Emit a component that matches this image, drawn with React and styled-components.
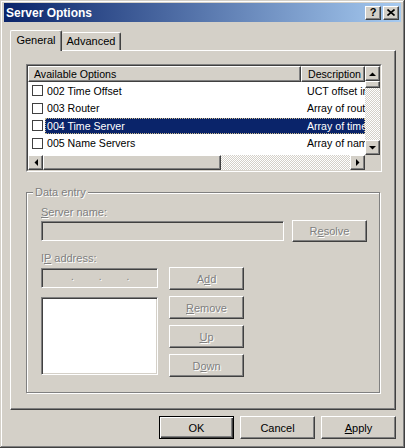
import React from "react";
import styled, { createGlobalStyle, css } from "styled-components";

const GlobalStyle = createGlobalStyle`
  html, body { margin: 0; padding: 0; }
  body {
    background: #d4d0c8;
    font-family: "Liberation Sans", Arial, sans-serif;
    font-size: 11px;
    color: #000;
  }
`;

const raised = css`
  border: 1px solid;
  border-color: #fff #404040 #404040 #fff;
  box-shadow: inset -1px -1px 0 #808080;
`;

const sunkenOuter = css`
  border: 1px solid;
  border-color: #808080 #fff #fff #808080;
`;

const disabledText = css`
  color: #808080;
  text-shadow: 1px 1px 0 #fff;
`;

const checker = css`
  background: repeating-conic-gradient(#fff 0 25%, #d4d0c8 0 50%) 0 0 / 2px 2px;
`;

const Window = styled.div`
  width: 405px;
  height: 448px;
  box-sizing: border-box;
  background: #d4d0c8;
  padding: 3px 4px 4px 4px;
  display: flex;
  flex-direction: column;
  box-shadow: inset -1px -1px 0 #404040, inset 1px 1px 0 #d4d0c8,
    inset -2px -2px 0 #808080, inset 2px 2px 0 #fff;
`;

const TitleBar = styled.div`
  height: 19px;
  flex: none;
  display: flex;
  align-items: center;
  justify-content: space-between;
  padding: 0 2px 0 2px;
  background: linear-gradient(to right, #0a246a, #a6caf0);
`;

const TitleText = styled.div`
  color: #fff;
  font-weight: bold;
  font-size: 12px;
`;

const TitleButtons = styled.div`
  display: flex;
  gap: 2px;
`;

const TitleButton = styled.div`
  width: 16px;
  height: 14px;
  box-sizing: border-box;
  background: #d4d0c8;
  ${raised};
  display: flex;
  align-items: center;
  justify-content: center;
  font-weight: bold;
  font-size: 11px;
  line-height: 1;
`;

const Body = styled.div`
  flex: 1;
  display: flex;
  flex-direction: column;
  padding: 8px 5px 0 6px;
`;

const TabStrip = styled.div`
  height: 20px;
  display: flex;
  align-items: flex-end;
  position: relative;
  z-index: 1;
`;

const Tab = styled.div`
  box-sizing: border-box;
  width: ${(p) => p.$w}px;
  height: ${(p) => (p.$active ? 21 : 18)}px;
  margin-bottom: ${(p) => (p.$active ? -1 : 0)}px;
  background: #d4d0c8;
  border-top: 1px solid #fff;
  border-left: ${(p) => (p.$active ? "1px solid #fff" : "none")};
  border-right: 1px solid #404040;
  box-shadow: inset -1px 0 0 #808080;
  border-radius: 2px 2px 0 0;
  display: flex;
  justify-content: center;
  padding-top: ${(p) => (p.$active ? 3 : 2)}px;
  font-size: 11px;
`;

const Panel = styled.div`
  height: 360px;
  box-sizing: border-box;
  border: 1px solid;
  border-color: #fff #404040 #404040 #fff;
  box-shadow: inset -1px -1px 0 #808080;
  padding: 13px 13px 0 15px;
  display: flex;
  flex-direction: column;
`;

const ListView = styled.div`
  width: 356px;
  height: 108px;
  box-sizing: border-box;
  ${sunkenOuter};
  font-size: 10.6px;
`;

const ListInner = styled.div`
  height: 100%;
  box-sizing: border-box;
  border: 1px solid;
  border-color: #404040 #d4d0c8 #d4d0c8 #404040;
  background: #fff;
  display: grid;
  grid-template-columns: 1fr 15px;
  grid-template-rows: 1fr 15px;
`;

const ListContent = styled.div`
  overflow: hidden;
  display: flex;
  flex-direction: column;
`;

const Header = styled.div`
  height: 16px;
  display: flex;
  flex: none;
`;

const HeaderCell = styled.div`
  box-sizing: border-box;
  width: ${(p) => (p.$w ? `${p.$w}px` : "auto")};
  flex: ${(p) => (p.$w ? "none" : "1")};
  background: #d4d0c8;
  ${raised};
  padding-left: ${(p) => p.$pad}px;
  display: flex;
  align-items: center;
  white-space: nowrap;
  overflow: hidden;
`;

const Row = styled.div`
  height: 17.5px;
  display: flex;
  align-items: center;
  flex: none;
`;

const CheckBox = styled.div`
  width: 11px;
  height: 11px;
  box-sizing: border-box;
  border: 1px solid #404040;
  background: #fff;
  margin-left: 4px;
  flex: none;
`;

const RowSel = styled.div`
  flex: 1;
  margin-left: 2px;
  height: 16px;
  box-sizing: border-box;
  display: flex;
  align-items: center;
  white-space: nowrap;
  overflow: hidden;
  ${(p) =>
    p.$selected &&
    css`
      background: #0a246a;
      color: #fff;
      outline: 1px dotted #c9b98a;
      outline-offset: -1px;
    `}
`;

const NameCell = styled.div`
  width: 256px;
  box-sizing: border-box;
  padding-left: 2px;
  flex: none;
`;

const DescCell = styled.div`
  flex: 1;
  padding-left: 6px;
  overflow: hidden;
`;

const VScroll = styled.div`
  display: flex;
  flex-direction: column;
  ${checker};
`;

const HScroll = styled.div`
  display: flex;
  ${checker};
`;

const ScrollBtn = styled.div`
  width: 15px;
  height: 15px;
  box-sizing: border-box;
  flex: none;
  background: #d4d0c8;
  ${raised};
  display: flex;
  align-items: center;
  justify-content: center;
`;

const Thumb = styled.div`
  box-sizing: border-box;
  flex: none;
  width: ${(p) => p.$w}px;
  height: ${(p) => p.$h}px;
  background: #d4d0c8;
  ${raised};
`;

const Track = styled.div`
  flex: 1;
`;

const Corner = styled.div`
  background: #d4d0c8;
`;

const GroupBox = styled.div`
  position: relative;
  margin-top: 20px;
  width: 354px;
  height: 201px;
  box-sizing: border-box;
  border: 1px solid #808080;
  box-shadow: inset 1px 1px 0 #fff, 1px 1px 0 #fff;
  padding: 13px 12px 0 14px;
  display: flex;
  flex-direction: column;
`;

const GroupLabel = styled.div`
  position: absolute;
  top: -7px;
  left: 6px;
  padding: 0 2px;
  background: #d4d0c8;
  line-height: 13px;
  ${disabledText};
`;

const FieldLabel = styled.div`
  height: 13px;
  line-height: 13px;
  margin-top: ${(p) => p.$mt || 0}px;
  ${disabledText};
`;

const FieldRow = styled.div`
  margin-top: 1px;
  display: flex;
  align-items: center;
  gap: 8px;
`;

const TextField = styled.div`
  width: ${(p) => p.$w}px;
  height: ${(p) => p.$h}px;
  box-sizing: border-box;
  ${sunkenOuter};
  box-shadow: inset 1px 1px 0 #404040, inset -1px -1px 0 #d4d0c8;
  background: ${(p) => (p.$white ? "#fff" : "#d4d0c8")};
  margin-top: ${(p) => p.$mt || 0}px;
  flex: none;
`;

const IpField = styled(TextField)`
  display: flex;
  align-items: center;
  gap: 25px;
  padding-left: 29px;
`;

const IpDot = styled.span`
  ${disabledText};
  font-size: 10px;
  line-height: 1;
  margin-top: -2px;
`;

const LowerArea = styled.div`
  margin-top: 2px;
  display: flex;
  gap: 11px;
`;

const Column = styled.div`
  display: flex;
  flex-direction: column;
  gap: ${(p) => p.$gap}px;
`;

const Button = styled.div`
  width: ${(p) => p.$w || 75}px;
  height: ${(p) => p.$h || 23}px;
  box-sizing: border-box;
  background: #d4d0c8;
  display: flex;
  align-items: center;
  justify-content: center;
  font-size: 11px;
  flex: none;
  ${(p) =>
    p.$default
      ? css`
          border: 1px solid #000;
          box-shadow: inset 1px 1px 0 #fff, inset -1px -1px 0 #404040,
            inset -2px -2px 0 #808080;
        `
      : raised};
  ${(p) => p.$disabled && disabledText};
`;

const ButtonRow = styled.div`
  margin-top: 6px;
  display: flex;
  justify-content: flex-end;
  gap: 6px;
`;

const Arrow = ({ dir }) => {
  const pts = {
    up: "0,4 7,4 3.5,0.5",
    down: "0,0 7,0 3.5,3.5",
    left: "4,0 4,7 0.5,3.5",
    right: "0,0 0,7 3.5,3.5",
  }[dir];
  const vertical = dir === "up" || dir === "down";
  return (
    <svg width={vertical ? 7 : 4} height={vertical ? 4 : 7} viewBox={vertical ? "0 0 7 4" : "0 0 4 7"}>
      <polygon points={pts} fill="#000" />
    </svg>
  );
};

const CloseGlyph = () => (
  <svg width="8" height="7" viewBox="0 0 8 7">
    <path d="M0.5 0.5 L7.5 6.5 M7.5 0.5 L0.5 6.5" stroke="#000" strokeWidth="1.6" />
  </svg>
);

const rows = [
  { name: "002 Time Offset", desc: "UCT offset in seconds" },
  { name: "003 Router", desc: "Array of router addresses" },
  { name: "004 Time Server", desc: "Array of time server addresses", selected: true },
  { name: "005 Name Servers", desc: "Array of name servers" },
];

export default function App() {
  return (
    <>
      <GlobalStyle />
      <Window>
        <TitleBar>
          <TitleText>Server Options</TitleText>
          <TitleButtons>
            <TitleButton>?</TitleButton>
            <TitleButton>
              <CloseGlyph />
            </TitleButton>
          </TitleButtons>
        </TitleBar>
        <Body>
          <TabStrip>
            <Tab $active $w={52}>General</Tab>
            <Tab $w={59}>Advanced</Tab>
          </TabStrip>
          <Panel>
            <ListView>
              <ListInner>
                <ListContent>
                  <Header>
                    <HeaderCell $w={273} $pad={5}>Available Options</HeaderCell>
                    <HeaderCell $pad={6}>Description</HeaderCell>
                  </Header>
                  {rows.map((r) => (
                    <Row key={r.name}>
                      <CheckBox />
                      <RowSel $selected={r.selected}>
                        <NameCell>{r.name}</NameCell>
                        <DescCell>{r.desc}</DescCell>
                      </RowSel>
                    </Row>
                  ))}
                </ListContent>
                <VScroll>
                  <ScrollBtn><Arrow dir="up" /></ScrollBtn>
                  <Thumb $w={15} $h={7} />
                  <Track />
                  <ScrollBtn><Arrow dir="down" /></ScrollBtn>
                </VScroll>
                <HScroll>
                  <ScrollBtn><Arrow dir="left" /></ScrollBtn>
                  <Thumb $w={178} $h={15} />
                  <Track />
                  <ScrollBtn><Arrow dir="right" /></ScrollBtn>
                </HScroll>
                <Corner />
              </ListInner>
            </ListView>
            <GroupBox>
              <GroupLabel>Data entry</GroupLabel>
              <FieldLabel><u>S</u>erver name:</FieldLabel>
              <FieldRow>
                <TextField $w={243} $h={20} />
                <Button $w={75} $h={22} $disabled>R<u>e</u>solve</Button>
              </FieldRow>
              <FieldLabel $mt={10}>I<u>P</u> address:</FieldLabel>
              <LowerArea>
                <Column $gap={9}>
                  <IpField $w={117} $h={20} $mt={1}>
                    <IpDot>.</IpDot>
                    <IpDot>.</IpDot>
                    <IpDot>.</IpDot>
                  </IpField>
                  <TextField $w={117} $h={78} $white />
                </Column>
                <Column $gap={6}>
                  <Button $disabled>A<u>d</u>d</Button>
                  <Button $disabled><u>R</u>emove</Button>
                  <Button $disabled><u>U</u>p</Button>
                  <Button $disabled>D<u>o</u>wn</Button>
                </Column>
              </LowerArea>
            </GroupBox>
          </Panel>
          <ButtonRow>
            <Button $default>OK</Button>
            <Button>Cancel</Button>
            <Button><u>A</u>pply</Button>
          </ButtonRow>
        </Body>
      </Window>
    </>
  );
}
